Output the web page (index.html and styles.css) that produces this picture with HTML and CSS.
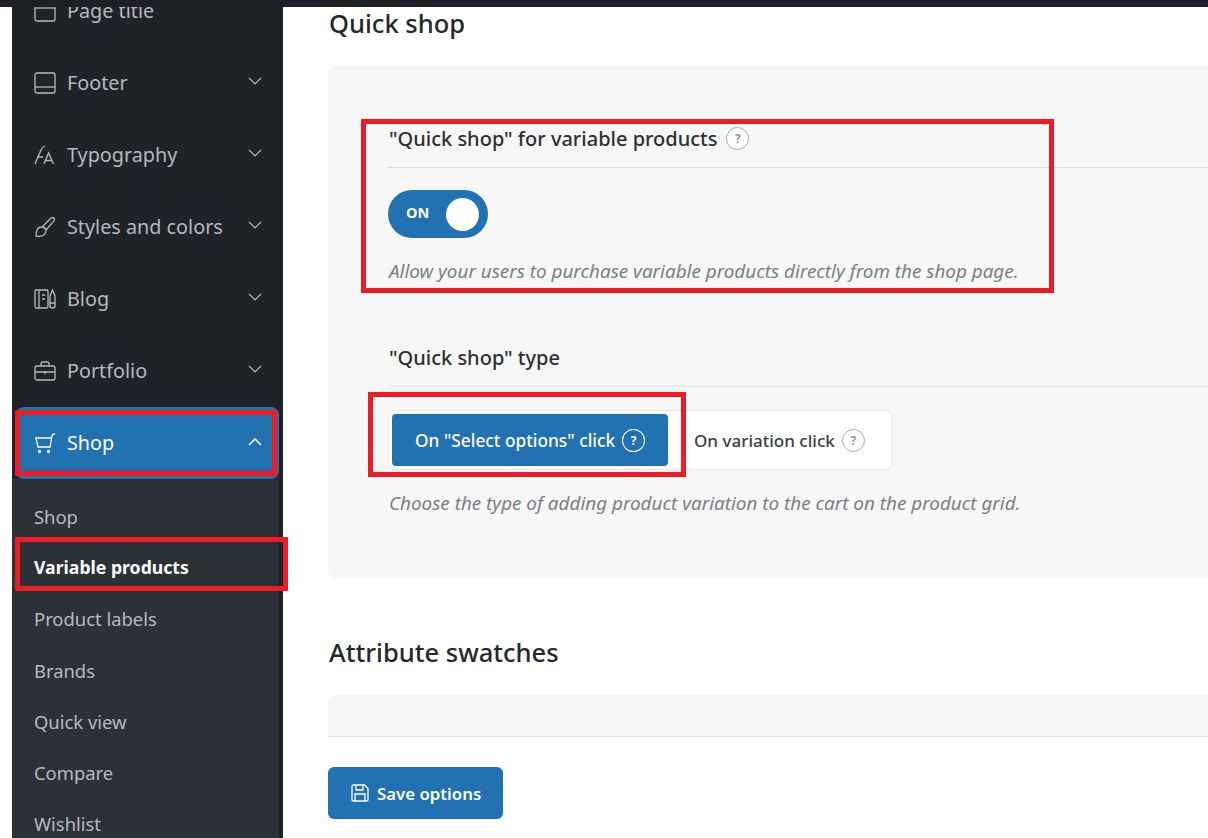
FILE: index.html
```html
<!DOCTYPE html>
<html lang="en">
<head>
  <meta charset="UTF-8">
  <title>Theme options - Variable products</title>
  <link rel="stylesheet" href="styles.css">
</head>
<body>
  <div class="topbar"></div>
  <div class="layout">
    <!-- left menu -->
    <aside class="sidebar">
      <ul class="menu">
        <li class="menu-item">
          <svg class="menu-icon" viewBox="0 0 22 22"><rect x="1" y="1" width="20" height="20" rx="2"/><path d="M1 8h20"/></svg>
          <span class="menu-label">Page title</span>
        </li>
        <li class="menu-item">
          <svg class="menu-icon" viewBox="0 0 22 22"><rect x="1" y="1" width="20" height="20" rx="2"/><path d="M1 15h20"/></svg>
          <span class="menu-label">Footer</span>
          <svg class="chevron" viewBox="0 0 14 8"><path d="M1 1l6 6 6-6"/></svg>
        </li>
        <li class="menu-item">
          <svg class="menu-icon" viewBox="0 0 22 22"><path d="M1 20L7 6q1-3 4-4M3 13h6M10 20l4.500-11 5 11M11.500 16.500h6.500"/></svg>
          <span class="menu-label">Typography</span>
          <svg class="chevron" viewBox="0 0 14 8"><path d="M1 1l6 6 6-6"/></svg>
        </li>
        <li class="menu-item">
          <svg class="menu-icon" viewBox="0 0 22 22"><path d="M8 11L17 2q2-1 3 0t0 3L12 14M8 11q3 0 4 3M8 11q-4 0-5 3t-1 6q4 1 7-.5t3-5.500"/></svg>
          <span class="menu-label">Styles and colors</span>
          <svg class="chevron" viewBox="0 0 14 8"><path d="M1 1l6 6 6-6"/></svg>
        </li>
        <li class="menu-item">
          <svg class="menu-icon" viewBox="0 0 22 22"><rect x="1" y="2" width="13" height="18" rx="1.500"/><path d="M5 2v18M8 7h3M8 11h3M16 8l2.500-6 2.500 6v10q0 2-2.500 2t-2.500-2zM16 15h5"/></svg>
          <span class="menu-label">Blog</span>
          <svg class="chevron" viewBox="0 0 14 8"><path d="M1 1l6 6 6-6"/></svg>
        </li>
        <li class="menu-item">
          <svg class="menu-icon" viewBox="0 0 22 22"><rect x="1" y="6" width="20" height="14" rx="2"/><path d="M7 6V4q0-2 2-2h4q2 0 2 2v2M1 12h20M11 11v3"/></svg>
          <span class="menu-label">Portfolio</span>
          <svg class="chevron" viewBox="0 0 14 8"><path d="M1 1l6 6 6-6"/></svg>
        </li>
        <li class="menu-item menu-item-active">
          <svg class="menu-icon" viewBox="0 0 22 22"><path d="M1 6h16M2 6l2 9h12l2-11q.3-2 3-2"/><circle cx="5.500" cy="19.500" r="1"/><circle cx="14.500" cy="19.500" r="1"/></svg>
          <span class="menu-label">Shop</span>
          <svg class="chevron" viewBox="0 0 14 8"><path d="M1 7l6-6 6 6"/></svg>
        </li>
      </ul>
      <ul class="submenu">
        <li>Shop</li>
        <li class="submenu-active">Variable products</li>
        <li>Product labels</li>
        <li>Brands</li>
        <li>Quick view</li>
        <li>Compare</li>
        <li>Wishlist</li>
      </ul>
    </aside>

    <!-- options -->
    <main class="content">
      <h2 class="section-title">Quick shop</h2>
      <section class="panel panel-main">
        <div class="field">
          <div class="field-title">"Quick shop" for variable products <span class="help">?</span></div>
          <div class="toggle"><span class="toggle-label">ON</span><span class="toggle-knob"></span></div>
          <p class="field-desc">Allow your users to purchase variable products directly from the shop page.</p>
        </div>
        <div class="field field-second">
          <div class="field-title">"Quick shop" type</div>
          <div class="segment">
            <div class="segment-option segment-active">On "Select options" click <span class="help">?</span></div>
            <div class="segment-option">On variation click <span class="help">?</span></div>
          </div>
          <p class="field-desc">Choose the type of adding product variation to the cart on the product grid.</p>
        </div>
      </section>
      <h2 class="section-title section-second">Attribute swatches</h2>
      <section class="panel panel-empty"></section>
      <button class="save-btn" type="button">
        <svg class="save-icon" viewBox="0 0 18 18"><path d="M2.500 1h11L17 4.500v11q0 1.500-1.500 1.500h-13Q1 17 1 15.500v-13Q1 1 2.500 1zM5 1v5h7V1M4 17v-7h10v7"/></svg>
        Save options
      </button>
    </main>
  </div>

  <!-- red marks drawn over the screenshot -->
  <div class="mark mark-toggle"></div>
  <div class="mark mark-type"></div>
  <div class="mark mark-shop"></div>
  <div class="mark mark-variable"></div>
</body>
</html>
```

FILE: styles.css
```css
/* reset */
* { margin: 0; padding: 0; box-sizing: border-box; }
html, body {
  height: 838px;
  overflow: hidden;
}
body {
  position: relative;
  font-family: "Noto Sans", "Open Sans", sans-serif;
  background-color: #fff;
  color: #2c3033;
}
ul { list-style: none; }

.topbar {
  height: 7px;
  background-color: #1d2125;
}
.layout {
  display: flex;
  height: 831px;
  padding-left: 12px;
  overflow: hidden;
}

/* sidebar */
.sidebar {
  width: 271px;
  flex-shrink: 0;
  background-color: #1f2328;
  overflow: hidden;
}
.menu {
  margin-top: -32px;
}
.menu-item {
  display: flex;
  align-items: center;
  height: 72px;
  margin: 0 4px;
  padding: 0 17px 0 18px;
  font-size: 19.800px;
  color: #b4b9bd;
}
.menu-label {
  margin-top: -2px;
}
.menu-icon {
  width: 22px;
  height: 22px;
  margin-right: 11px;
  flex-shrink: 0;
  fill: none;
  stroke: currentColor;
  stroke-width: 1.300;
}
.chevron {
  width: 14px;
  height: 8px;
  margin-left: auto;
  margin-top: -4px;
  fill: none;
  stroke: currentColor;
  stroke-width: 1.200;
}
.menu-item-active {
  background-color: #2271b1;
  border-radius: 8px;
  color: #fff;
}
.menu-item-active .chevron {
  margin-top: -2px;
  stroke-width: 1.500;
}
.submenu {
  margin-right: 4px;
  height: 400px;
  padding-top: 11.500px;
  background-color: #2c3138;
}
.submenu li {
  display: flex;
  align-items: center;
  height: 51.300px;
  padding-left: 22px;
  font-size: 18.400px;
  color: #b4b9bd;
}
.submenu .submenu-active {
  font-weight: 700;
  font-size: 17.650px;
  color: #fff;
}

/* main column */
.content {
  flex: 1;
  min-width: 0;
  padding-left: 45px;
}
.section-title {
  height: 34px;
  padding-left: 1px;
  line-height: 33px;
  font-size: 25.500px;
  font-weight: 500;
  color: #24282b;
}
.section-second {
  margin-top: 57px;
  line-height: 34px;
}
.panel {
  background-color: #f7f7f7;
  border-radius: 8px 0 0 8px;
}
.panel-main {
  margin-top: 25px;
  padding: 59px 0 62px 60px;
}
.panel-empty {
  margin-top: 26px;
  height: 42px;
  border-radius: 8px 0 0 0;
  border-bottom: 1px solid #e6e6e6;
}
.field-second {
  margin-top: 60px;
}
.field-title {
  display: flex;
  align-items: center;
  gap: 9px;
  height: 43px;
  padding: 0 0 15px 1px;
  border-bottom: 1px solid #e2e2e2;
  font-size: 20px;
  font-weight: 500;
  color: #2c3033;
}
.field-desc {
  margin-top: 20px;
  height: 26px;
  padding-left: 1px;
  line-height: 26px;
  font-size: 18.850px;
  font-style: italic;
  color: #7b7f85;
}

/* ? badge */
.help {
  display: inline-flex;
  align-items: center;
  justify-content: center;
  width: 23px;
  height: 23px;
  border: 1px solid #aaa;
  border-radius: 50%;
  background-color: #fff;
  font-size: 12px;
  font-weight: 700;
  color: #999;
}

/* switch */
.toggle {
  display: flex;
  align-items: center;
  justify-content: space-between;
  width: 100px;
  height: 48px;
  margin-top: 22px;
  padding: 0 9px 0 18px;
  border-radius: 24px;
  background-color: #2271b1;
}
.toggle-label {
  font-size: 14.500px;
  font-weight: 700;
  color: #fff;
  margin-top: -5px;
}
.toggle-knob {
  width: 33px;
  height: 33px;
  border-radius: 50%;
  background-color: #fff;
}

/* type switcher */
.segment {
  display: inline-flex;
  height: 60px;
  margin-top: 23px;
  padding: 3px;
  border: 1px solid #e8e8e8;
  border-radius: 6px;
  background-color: #fff;
}
.segment-option {
  display: flex;
  align-items: center;
  gap: 7px;
  padding: 0 23px 0 26px;
  font-size: 17.050px;
  font-weight: 500;
  color: #3a3e42;
  white-space: nowrap;
}
.segment-active {
  width: 276px;
  padding: 0 23px;
  border-radius: 4px;
  background-color: #2271b1;
  font-size: 17.300px;
  color: #fff;
}
.segment-active .help {
  background-color: transparent;
  border-color: #fff;
  color: #fff;
}

/* save */
.save-btn {
  display: flex;
  align-items: center;
  gap: 8px;
  width: 175px;
  height: 52px;
  margin-top: 30px;
  padding-left: 23px;
  border: none;
  border-radius: 6px;
  background-color: #2271b1;
  font-family: inherit;
  font-size: 16.800px;
  font-weight: 600;
  color: #fff;
}
.save-icon {
  width: 18px;
  height: 18px;
  fill: none;
  stroke: #fff;
  stroke-width: 1.300;
}

/* annotation boxes */
.mark {
  position: absolute;
  border: 5px solid #ed1c24;
}
.mark-toggle { left: 361px; top: 119px; width: 693px; height: 174px; }
.mark-type { left: 368px; top: 392px; width: 318px; height: 85px; }
.mark-shop { left: 15px; top: 410px; width: 262px; height: 66px; }
.mark-variable { left: 15px; top: 537px; width: 273px; height: 54px; }
```
